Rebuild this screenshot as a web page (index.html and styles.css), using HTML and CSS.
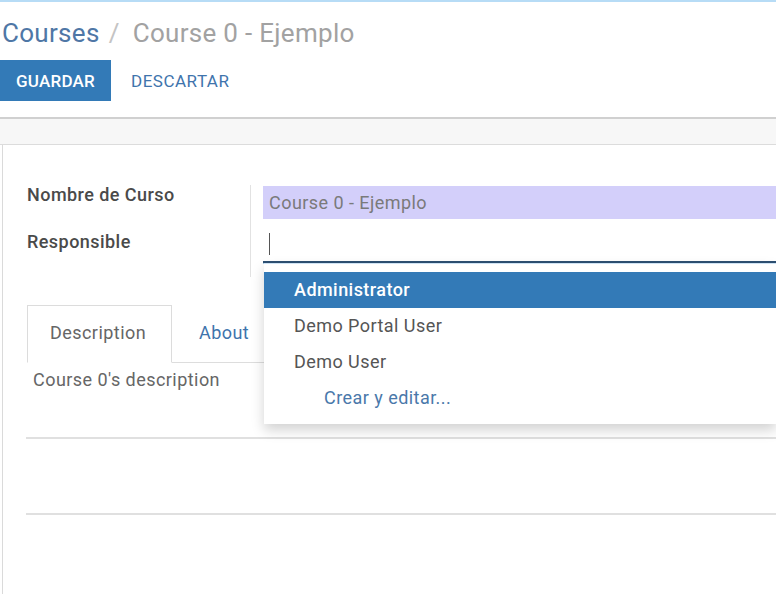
FILE: index.html
```html
<!DOCTYPE html>
<html>
<head>
<meta charset="utf-8">
<link rel="stylesheet" href="styles.css">
</head>
<body>
<div class="topline"></div>
<div class="control-panel">
  <div class="breadcrumb">
    <a class="crumb-link">Courses</a><span class="crumb-sep">/</span><span class="crumb-active">Course 0 - Ejemplo</span>
  </div>
  <div class="buttons">
    <button class="btn btn-primary">GUARDAR</button>
    <button class="btn btn-link">DESCARTAR</button>
  </div>
</div>
<div class="band"></div>
<div class="sheet">
  <div class="group">
    <div class="labels">
      <div class="label">Nombre de Curso</div>
      <div class="label">Responsible</div>
    </div>
    <div class="fields">
      <div class="field-name">Course 0 - Ejemplo</div>
      <div class="field-resp"><span class="caret"></span></div>
      <ul class="dropdown">
        <li class="item active">Administrator</li>
        <li class="item">Demo Portal User</li>
        <li class="item">Demo User</li>
        <li class="item create">Crear y editar...</li>
      </ul>
    </div>
  </div>
  <div class="notebook">
    <ul class="tabs">
      <li class="tab active">Description</li>
      <li class="tab">About</li>
    </ul>
    <div class="pane">Course 0's description</div>
  </div>
  <div class="rule"></div>
  <div class="rule second"></div>
</div>
</body>
</html>
```
FILE: styles.css
```css
* { box-sizing: border-box; }
html, body { margin: 0; padding: 0; }
body {
  font-family: Roboto, "Liberation Sans", sans-serif;
  font-size: 18px;
  letter-spacing: 0.45px;
  color: #555;
  background: #fff;
  width: 776px;
  height: 594px;
  overflow: hidden;
}
.topline { height: 2px; background: #b7dcf6; }
.control-panel { height: 115px; }
.breadcrumb {
  height: 58px;
  padding: 13px 0 0 2px;
  font-size: 26px;
  letter-spacing: 0.3px;
  line-height: 36px;
}
.crumb-link { color: #4f77a6; }
.crumb-sep { color: #c4c4c4; margin: 0 13px 0 9px; }
.crumb-active { color: #a2a2a2; }
.buttons { display: flex; align-items: center; }
.btn {
  font-family: Roboto, "Liberation Sans", sans-serif;
  font-size: 17px;
  letter-spacing: 0.5px;
  border: 0;
  height: 41px;
  padding: 0 15px;
  background: none;
}
.btn-primary { background: #337ab7; color: #fff; width: 111px; font-weight: 500; letter-spacing: 0.2px; }
.btn-link { color: #3f74ac; margin-left: 5px; }
.band {
  height: 28px;
  background: #f7f7f7;
  border-top: 2px solid #d0d0d0;
  border-bottom: 1px solid #dcdcdc;
}
.sheet {
  border-left: 1px solid #dadada;
  margin-left: 2px;
  padding-top: 40px;
  height: 460px;
}
.group { display: flex; }
.labels {
  width: 248px;
  padding-left: 24px;
  border-right: 1px solid #e2e2e2;
  height: 92px;
}
.label {
  font-weight: 500;
  color: #4a4a4a;
  height: 24px;
  line-height: 24px;
  margin-top: -2px;
  margin-bottom: 25px;
}
.fields { position: relative; flex: 1; padding-left: 12px; }
.field-name {
  height: 33px;
  margin-top: 1px;
  background: #d3cffa;
  color: #7a7a7a;
  line-height: 33px;
  padding-left: 6px;
}
.field-resp {
  height: 39px;
  margin-top: 5px;
  border-bottom: 2px solid #2d5073;
  box-shadow: 0 1px 0 #a8cbe8;
  padding: 9px 0 0 6px;
}
.caret { display: block; width: 1px; height: 22px; background: #555; }
.dropdown {
  position: absolute;
  left: 13px;
  right: 0;
  top: 78px;
  margin: 0;
  padding: 8px 0;
  list-style: none;
  background: #fff;
  box-shadow: 0 6px 12px rgba(0,0,0,0.18);
  border-top: 1px solid #cfe3f4;
}
.item {
  height: 36px;
  line-height: 36px;
  padding-left: 30px;
  color: #555;
}
.item.active { background: #337ab7; color: #fff; font-weight: 500; }
.item.create { padding-left: 60px; color: #4a78aa; }
.notebook { margin-top: 28px; padding-left: 24px; }
.tabs {
  display: flex;
  margin: 0;
  padding: 0;
  list-style: none;
  height: 58px;
  border-bottom: 1px solid #ddd;
}
.tab {
  height: 58px;
  line-height: 54px;
  padding: 0 26px;
  color: #3f74ac;
  border: 1px solid transparent;
}
.tab.active {
  color: #666;
  border-color: #dcdcdc;
  border-bottom-color: #fff;
  background: #fff;
  width: 145px;
  padding: 0 22px;
}
.pane { padding: 5px 0 0 6px; height: 74px; line-height: 24px; color: #666; }
.rule { margin-left: 23px; height: 2px; background: #e0e0e0; }
.rule.second { margin-top: 74px; }
```
